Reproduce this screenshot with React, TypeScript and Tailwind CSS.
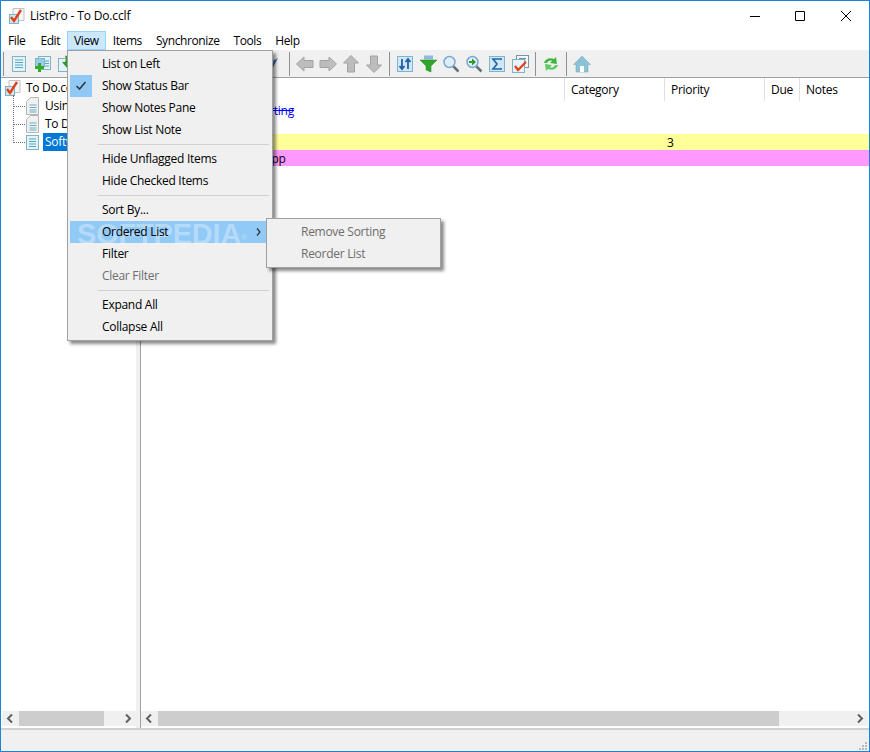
import type { ReactNode } from 'react'

const Ico = ({ children, size = 18 }: { children: ReactNode; size?: number }) => (
  <svg width={size} height={size} viewBox="0 0 18 18" className="shrink-0">
    {children}
  </svg>
)

const ListDoc = () => (
  <Ico>
    <rect x="2.500" y="1.500" width="13" height="15" fill="#e3f3f7" stroke="#7db5c2" />
    <path d="M5 5h8M5 7.500h8M5 10h8M5 12.500h8" stroke="#5aa5c2" />
  </Ico>
)

const AddDoc = () => (
  <Ico>
    <rect x="5.500" y="1.500" width="12" height="13" fill="#e3f3f7" stroke="#7db5c2" />
    <rect x="2.500" y="3.500" width="9" height="8" fill="#9cc9ec" stroke="#7db5c2" />
    <path d="M12 6h4M12 8.500h4M12 11h4" stroke="#5aa5c2" />
    <path d="M5 8h3v3h3v3H8v3H5v-3H2v-3h3z" fill="#35a92c" />
  </Ico>
)

const DownDoc = () => (
  <Ico>
    <rect x="2.500" y="3.500" width="12" height="13" fill="#e3f3f7" stroke="#7db5c2" />
    <path d="M9 1c4-1 5 3 4 6h3l-5 6-5-6h3c1-2 1-4 0-6z" fill="#2f9a2c" />
  </Ico>
)

const Wing = () => (
  <Ico>
    <path d="M16 3 5 8l-4 2 7 1 1 5 2-2 1-6z" fill="#5d8fc8" />
    <path d="M16 3 8 11l1 5z" fill="#34639f" />
  </Ico>
)

const GreyArrow = ({ d }: { d: string }) => (
  <Ico>
    <path d={d} fill="#bdbdbd" stroke="#a2a2a2" />
  </Ico>
)

const SortBox = () => (
  <Ico>
    <rect x="1.500" y="1.500" width="15" height="15" fill="#cfe8f6" stroke="#7fb4cf" />
    <path d="M6 4v10M3.500 11 6 14l2.500-3M12 14V4M9.500 7 12 4l2.500 3" stroke="#1f5fa8" strokeWidth="1.800" fill="none" />
  </Ico>
)

const Funnel = () => (
  <Ico>
    <rect x="5" y="0.500" width="9" height="4" fill="#8db8e0" />
    <path d="M1 5h17l-6 6v6l-5-2v-4z" fill="#2fa52a" stroke="#1c8a1c" strokeWidth="0.500" />
  </Ico>
)

const Magnifier = ({ arrow = false }: { arrow?: boolean }) => (
  <Ico>
    <circle cx="7.500" cy="7" r="5.500" fill="#deeef9" stroke="#7ba9cc" strokeWidth="1.500" />
    <path d="m11.500 11.500 5 5" stroke="#64707c" strokeWidth="2.500" />
    {arrow && <path d="M4 6h3V3.500L11 7l-4 3.500V8H4z" fill="#2f9a2c" />}
  </Ico>
)

const Sigma = () => (
  <Ico>
    <rect x="1.500" y="1.500" width="15" height="15" fill="#cfe8f6" stroke="#7fb4cf" />
    <path d="M13 5V4H5l4 5-4 5h8v-1" stroke="#2a62ad" strokeWidth="1.700" fill="none" />
  </Ico>
)

const CheckDoc = () => (
  <Ico>
    <rect x="5.500" y="0.500" width="12" height="12" fill="#f4f8fa" stroke="#7c93a5" />
    <path d="M8 3.500h7M8 6h7" stroke="#6b8aa5" />
    <rect x="1.500" y="4.500" width="12" height="13" fill="#e9f3f8" stroke="#7db5c2" />
    <path d="m4 11 3 4 8-8" stroke="#e0401c" strokeWidth="2.200" fill="none" />
  </Ico>
)

const Refresh = () => (
  <Ico>
    <path d="M2 8c1-4 6-6 10-4l2-2 1 7-7-1 2-2c-2-1-4 0-5 2z" fill="#3cb53e" />
    <path d="M16 10c-1 4-6 6-10 4l-2 2-1-7 7 1-2 2c2 1 4 0 5-2z" fill="#62c964" />
  </Ico>
)

const Home = () => (
  <Ico>
    <path d="M9 1 .5 9.500H3V17h12V9.500h2.500z" fill="#8cc2d6" stroke="#6ba7bd" strokeWidth="0.500" />
    <rect x="7" y="11" width="4" height="6" fill="#fff" />
  </Ico>
)

const Logo = ({ size = 16 }: { size?: number }) => (
  <svg width={size} height={size} viewBox="0 0 16 16" className="shrink-0">
    <path d="M4 .5h11v12H4z" fill="#f6f6f6" stroke="#c2c2c2" />
    <rect x="0.500" y="6.500" width="9" height="9" fill="#cfe5ee" stroke="#7db5c2" />
    <path d="m2 9 3 4 7-11" stroke="#e2401c" strokeWidth="2.400" fill="none" />
  </svg>
)

const SmallDoc = () => (
  <svg width="13" height="18" viewBox="0 0 13 18" className="shrink-0">
    <path d="M4.500.5h8v17H.5V4.500z" fill="#f0f0f0" stroke="#b5b5b5" />
    <path d="M3.500 8h7M3.500 10.500h7M3.500 13h7M3.500 15h7" stroke="#6cb0ca" />
  </svg>
)

const SelectedDoc = () => (
  <svg width="13" height="18" viewBox="0 0 13 18" className="shrink-0">
    <rect x="0.500" y="2.500" width="12" height="14" fill="#e3f3f7" stroke="#7db5c2" />
    <path d="M3 6h7M3 8.500h7M3 11h7M3 13.500h7" stroke="#5aa5c2" />
  </svg>
)

const Sep = () => <div className="ml-[3px] mr-[4px] h-[24px] w-px bg-[#909090]" />

const Tool = ({ children }: { children: ReactNode }) => (
  <div className="flex w-[23px] justify-center">{children}</div>
)

const ScrollBar = ({ thumbWidth }: { thumbWidth: string }) => (
  <div className="flex h-[15px] items-center bg-[#f0f0f0]">
    <svg width="17" height="15" viewBox="0 0 17 15" className="shrink-0">
      <path d="M10 3.500 6 7.500l4 4" stroke="#606060" strokeWidth="2" fill="none" />
    </svg>
    <div className={`h-full bg-[#cdcdcd] ${thumbWidth}`} />
    <div className="flex-1" />
    <svg width="17" height="15" viewBox="0 0 17 15" className="shrink-0">
      <path d="m7 3.500 4 4-4 4" stroke="#606060" strokeWidth="2" fill="none" />
    </svg>
  </div>
)

const MenuItem = ({
  label,
  checked,
  disabled,
}: {
  label: string
  checked?: boolean
  disabled?: boolean
}) => (
  <div className="flex h-[22px] items-center">
    <div className={`flex h-[22px] w-[22px] items-center justify-center ${checked ? 'bg-[#90c8f6]' : ''}`}>
      {checked && (
        <svg width="12" height="10" viewBox="0 0 12 10">
          <path d="m1.500 5 3 3 6-7" stroke="#2f3a44" strokeWidth="1.600" fill="none" />
        </svg>
      )}
    </div>
    <span className={`pl-[10px] ${disabled ? 'text-[#6d6d6d]' : ''}`}>{label}</span>
  </div>
)

const MenuSep = () => (
  <div className="flex h-[7px] items-center pl-[28px] pr-[1px]">
    <div className="h-px w-full bg-[#d0d0d0]" />
  </div>
)

const Row = ({
  bg,
  text,
  textClass,
  pri,
}: {
  bg?: string
  text?: string
  textClass?: string
  pri?: string
}) => (
  <div className={`flex h-[16px] items-center pt-[2px] ${bg ?? ''}`}>
    <div className={`w-[526px] whitespace-nowrap ${textClass ?? 'pl-[8px]'}`}>{text}</div>
    <div>{pri}</div>
  </div>
)

export default function App() {
  const menus = ['File', 'Edit', 'View', 'Items', 'Synchronize', 'Tools', 'Help']
  return (
    <div className="relative flex h-[752px] w-[870px] flex-col overflow-hidden border border-[#1883d7] bg-white font-['Open_Sans',sans-serif] text-[12px] leading-none tracking-[-0.28px] text-black">
      {/* title bar */}
      <div className="flex h-[29px] items-center">
        <div className="ml-[8px]">
          <Logo />
        </div>
        <span className="ml-[5px] tracking-[-0.15px]">ListPro - To Do.cclf</span>
        <div className="flex-1" />
        <svg width="113" height="12" viewBox="0 0 113 12" className="mr-[6px]">
          <path d="M0 6.500h10M45.500 1.500h9v9h-9zM91 1l10 10M101 1 91 11" stroke="#000" fill="none" />
        </svg>
      </div>

      {/* menu bar */}
      <div className="flex h-[20px] items-start pt-[1px] tracking-[-0.4px]">
        {menus.map((m) => (
          <div
            key={m}
            className={`flex h-[19px] items-center border px-[6px] pt-[1px] first:mr-[1px] ${
              m === 'View' ? 'border-[#99d1ff] bg-[#cce8ff]' : 'border-transparent'
            }`}
          >
            {m}
          </div>
        ))}
      </div>

      {/* toolbar */}
      <div className="flex h-[28px] items-center border-b border-[#a0a0a0] bg-[#f0f0f0] pl-[2px]">
        <div className="mr-[3.500px] h-[24px] w-px bg-[#909090]" />
        <Tool><ListDoc /></Tool>
        <Tool><AddDoc /></Tool>
        <Tool><DownDoc /></Tool>
        <div className="w-[183px]" />
        <Tool><Wing /></Tool>
        <div className="w-[3px]" />
        <Sep />
        <Tool><GreyArrow d="M.5 9 8 2v3.500h9v7H8V16z" /></Tool>
        <Tool><GreyArrow d="M17.500 9 10 2v3.500H1v7h9V16z" /></Tool>
        <Tool><GreyArrow d="M9 .5 16.500 8H12.500v9h-7V8h-4z" /></Tool>
        <Tool><GreyArrow d="M9 17.500 16.500 10H12.500V1h-7v9h-4z" /></Tool>
        <Sep />
        <Tool><SortBox /></Tool>
        <Tool><Funnel /></Tool>
        <Tool><Magnifier /></Tool>
        <Tool><Magnifier arrow /></Tool>
        <Tool><Sigma /></Tool>
        <Tool><CheckDoc /></Tool>
        <Sep />
        <Tool><Refresh /></Tool>
        <Sep />
        <Tool><Home /></Tool>
      </div>

      {/* panes */}
      <div className="flex min-h-0 flex-1">
        <div className="flex w-[135px] flex-col">
          <div className="relative flex-1 pl-[4px] pt-[1px]">
            <div className="absolute left-[12px] top-[17px] h-[46px] border-l border-dotted border-[#707070]" />
            <div className="flex h-[18px] items-center gap-[5px]">
              <Logo />
              <span>To Do.cclf</span>
            </div>
            {['Using ListPro', 'To Do List', 'Software'].map((t, i) => (
              <div key={t} className="flex h-[18px] items-center">
                <div className="ml-[8px] mr-[1px] w-[12px] border-b border-dotted border-[#707070]" />
                {i === 2 ? <SelectedDoc /> : <SmallDoc />}
                <span
                  className={`ml-[4px] flex h-[18px] items-center px-[2px] ${i === 2 ? 'bg-[#0078d7] text-white' : ''}`}
                >
                  {t}
                </span>
              </div>
            ))}
          </div>
          <div className="ml-[1px]">
            <ScrollBar thumbWidth="w-[85px]" />
          </div>
          <div className="h-[2px]" />
        </div>

        <div className="w-[4px] bg-[#f0f0f0]" />
        <div className="w-px bg-[#a0a0a0]" />

        <div className="flex min-w-0 flex-1 flex-col">
          <div className="flex h-[23px] items-start">
            <div className="h-[23px] w-[424px] border-r border-[#e0e0e0]" />
            {[
              ['Category', 'w-[100px]'],
              ['Priority', 'w-[100px]'],
              ['Due', 'w-[35px]'],
            ].map(([c, w]) => (
              <div key={c} className={`flex h-[23px] items-center border-r border-[#e0e0e0] pl-[6px] pt-[1px] ${w}`}>
                {c}
              </div>
            ))}
            <div className="flex h-[23px] items-center pl-[6px] pt-[1px]">Notes</div>
          </div>
          <div className="mt-[1px] flex-1">
            <Row text="Using ListPro with Sorting" textClass="pl-[17px] text-[#0000ff] line-through" />
            <Row />
            <Row bg="bg-[#ffff99]" pri="3" />
            <Row bg="bg-[#ff99ff]" text="Software to download app" textClass="pl-[4px]" />
          </div>
          <div className="mr-[1px]">
            <ScrollBar thumbWidth="w-[621px]" />
          </div>
          <div className="h-[2px]" />
        </div>
      </div>

      {/* status bar */}
      <div className="relative h-[23px] border-t-[2px] border-[#d0d0d0] bg-[#f0f0f0]">
        <svg width="10" height="10" viewBox="0 0 10 10" className="absolute bottom-0 right-[1px]">
          <path d="M7 1h2v2H7zM4 4h2v2H4zM7 4h2v2H7zM1 7h2v2H1zM4 7h2v2H4zM7 7h2v2H7z" fill="#b8b8b8" />
        </svg>
      </div>

      {/* open View menu */}
      <div className="absolute left-[66px] top-[49px] w-[206px] border border-[#a0a0a0] bg-[#f0f0f0] py-[2px] pl-[2px] pr-[2px] shadow-[3px_3px_3px_rgba(0,0,0,0.45)]">
        <MenuItem label="List on Left" />
        <MenuItem label="Show Status Bar" checked />
        <MenuItem label="Show Notes Pane" />
        <MenuItem label="Show List Note" />
        <MenuSep />
        <MenuItem label="Hide Unflagged Items" />
        <MenuItem label="Hide Checked Items" />
        <MenuSep />
        <MenuItem label="Sort By..." />
        <div className="relative flex h-[22px] items-center bg-[#91c9f7]">
          <span className="absolute left-[7px] top-[0px] whitespace-nowrap font-['Liberation_Sans',sans-serif] text-[29px] font-bold leading-[26px] tracking-[-0.2px] text-white/35">
            SOFTPEDIA<sup className="text-[8px] font-normal">®</sup>
          </span>
          <span className="relative pl-[32px]">Ordered List</span>
        </div>
        <MenuItem label="Filter" />
        <MenuItem label="Clear Filter" disabled />
        <MenuSep />
        <MenuItem label="Expand All" />
        <MenuItem label="Collapse All" />
      </div>

      {/* arrow of the highlighted item */}
      <svg width="6" height="8" viewBox="0 0 6 8" className="absolute left-[255px] top-[227px]">
        <path d="m1 .5 3 3.500-3 3.500" stroke="#303030" strokeWidth="1.200" fill="none" />
      </svg>

      {/* Ordered List submenu */}
      <div className="absolute left-[265px] top-[217px] w-[175px] border border-[#a0a0a0] bg-[#f0f0f0] py-[2px] shadow-[3px_3px_3px_rgba(0,0,0,0.45)]">
        {['Remove Sorting', 'Reorder List'].map((s) => (
          <div key={s} className="flex h-[22px] items-center pl-[34px] text-[#6d6d6d]">
            {s}
          </div>
        ))}
      </div>
    </div>
  )
}
